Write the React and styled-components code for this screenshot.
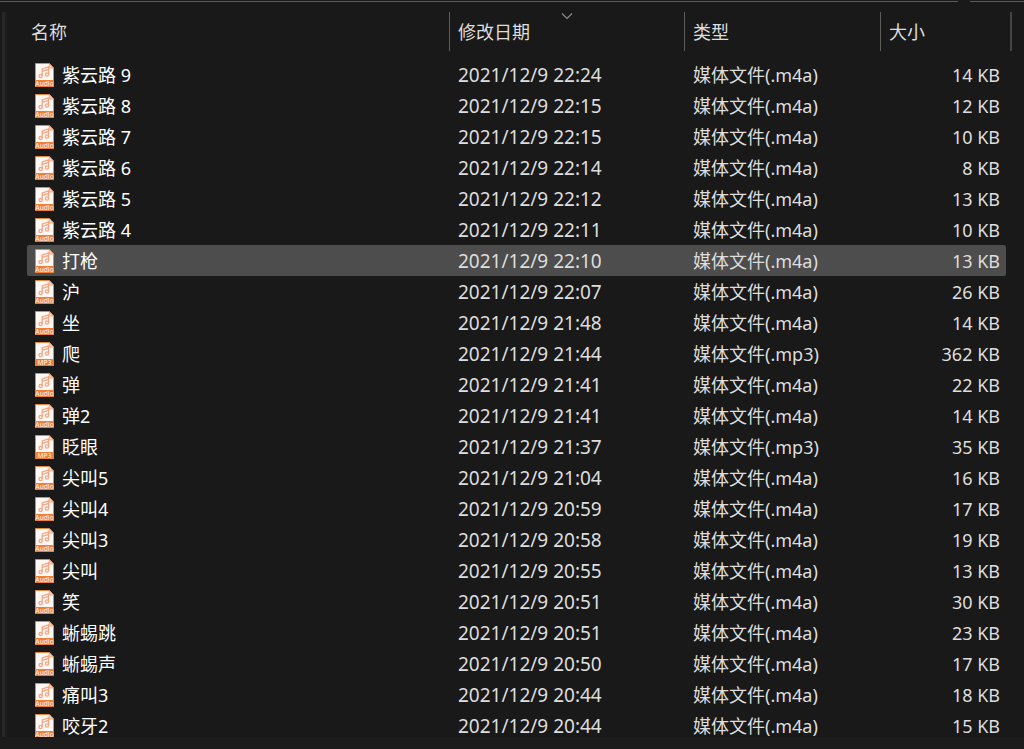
import { useState } from 'react';
import styled, { createGlobalStyle, css } from 'styled-components';

const GlobalStyle = createGlobalStyle`
  * {
    box-sizing: border-box;
  }
  body {
    margin: 0;
    background: #191919;
    color: #dedede;
    font-family: 'Noto Sans', 'Noto Sans CJK SC', sans-serif;
    font-size: 18px;
  }
`;

const Window = styled.div`
  display: flex;
  flex-direction: column;
  height: 100vh;
  overflow: hidden;
`;
const TopEdge = styled.div`
  display: flex;
  flex: none;
  gap: 12px;
  height: 12px;
  padding-top: 1px;
`;
const BoxEdge = styled.div`
  flex: ${(props) => (props.$grow ? '1' : '0 0 54px')};
  height: 1px;
  background: #5c5c5c;
`;
const Content = styled.main`
  display: flex;
  flex: 1;
  min-height: 0;
  padding: 0 12px 0 2px;
`;
const PaneDivider = styled.div`
  flex: none;
  width: 5px;
  margin-right: 20px;
  border-left: 3px solid #282828;
  background: #1e1e1e;
`;
const StatusBar = styled.footer`
  flex: none;
  height: 12px;
  background: #1c1c1c;
`;

const FileTable = styled.table`
  flex: 1;
  table-layout: fixed;
  border-collapse: separate;
  border-spacing: 0;
  align-self: flex-start;
`;
const HeaderCell = styled.th`
  width: ${(props) => props.$width || 'auto'};
  height: 47px;
  padding: 0;
  vertical-align: top;
`;
const HeaderButton = styled.button`
  position: relative;
  display: flex;
  align-items: center;
  width: 100%;
  height: 39px;
  padding: 0 0 2px ${(props) => (props.$first ? '4px' : '8px')};
  border: 0;
  border-right: ${(props) => (props.$last ? '2px solid #444' : '1px solid #5e5e5e')};
  background: none;
  color: #dedede;
  font: inherit;
  font-weight: 400;
  text-align: left;
`;
const SortArrow = styled.svg`
  position: absolute;
  top: 0;
  left: 50%;
  width: 12px;
  height: 8px;
  margin-left: -6px;
`;

const Row = styled.tr`
  cursor: default;
  ${(props) =>
    props.$selected &&
    css`
      td {
        background-color: #4d4d4d;
      }
    `}
`;
const Cell = styled.td`
  height: 31px;
  padding: 0 0 0 8px;
  line-height: 30px;
  white-space: nowrap;
`;
const NameCell = styled(Cell)`
  border-radius: 2px 0 0 2px;
  color: #fff;
`;
const DateCell = styled(Cell)`
  font-size: 19px;
`;
const SizeCell = styled(Cell)`
  padding-right: 6px;
  border-right: 6px solid transparent;
  background-clip: padding-box;
  border-radius: 0 8px 8px 0 / 0 2px 2px 0;
  text-align: right;
`;
const FileLabel = styled.div`
  display: flex;
  align-items: center;
  gap: 8px;
  height: 30px;
`;
const IconSvg = styled.svg`
  flex: none;
  width: 19px;
  height: 24px;
`;

const columns = [
  { key: 'name', title: '名称' },
  { key: 'date', title: '修改日期', width: '235px' },
  { key: 'type', title: '类型', width: '196px' },
  { key: 'size', title: '大小', width: '131px' },
];

const files = [
  ['紫云路 9', '22:24', 'm4a', 14],
  ['紫云路 8', '22:15', 'm4a', 12],
  ['紫云路 7', '22:15', 'm4a', 10],
  ['紫云路 6', '22:14', 'm4a', 8],
  ['紫云路 5', '22:12', 'm4a', 13],
  ['紫云路 4', '22:11', 'm4a', 10],
  ['打枪', '22:10', 'm4a', 13],
  ['沪', '22:07', 'm4a', 26],
  ['坐', '21:48', 'm4a', 14],
  ['爬', '21:44', 'mp3', 362],
  ['弹', '21:41', 'm4a', 22],
  ['弹2', '21:41', 'm4a', 14],
  ['眨眼', '21:37', 'mp3', 35],
  ['尖叫5', '21:04', 'm4a', 16],
  ['尖叫4', '20:59', 'm4a', 17],
  ['尖叫3', '20:58', 'm4a', 19],
  ['尖叫', '20:55', 'm4a', 13],
  ['笑', '20:51', 'm4a', 30],
  ['蜥蜴跳', '20:51', 'm4a', 23],
  ['蜥蜴声', '20:50', 'm4a', 17],
  ['痛叫3', '20:44', 'm4a', 18],
  ['咬牙2', '20:44', 'm4a', 15],
];

const FileIcon = ({ ext }) => (
  <IconSvg viewBox="0 0 19 24" aria-hidden="true">
    <path d="M.5.5h13.7l4.3 4.6v18.4H.5z" fill="#fff8f4" stroke="#ee8440" />
    <path d="M14.2.5v4.6h4.3z" fill="#fbd3bb" stroke="#ee9a68" strokeWidth=".7" />
    <path d="M0 17h19v7H0z" fill="#f07f36" />
    <g fill="none" stroke="#f5a583" strokeWidth="1.3">
      <path d="M7.2 13V6l6.4-2v7.4M7.2 8.4l6.4-2" />
      <circle cx="5.6" cy="13" r="1.6" />
      <circle cx="12" cy="11.5" r="1.6" />
    </g>
    <text
      x="9.5"
      y="23"
      textAnchor="middle"
      fontFamily="Noto Sans, sans-serif"
      fontSize="6.6"
      fontWeight="500"
      fill="#ffe9dc"
    >
      {ext === 'mp3' ? 'MP3' : 'Audio'}
    </text>
  </IconSvg>
);

const App = () => {
  const [selected, setSelected] = useState(6);

  return (
    <Window>
      <GlobalStyle />
      <TopEdge>
        <BoxEdge $grow />
        <BoxEdge />
      </TopEdge>
      <Content>
        <PaneDivider />
        <FileTable>
          <thead>
            <tr>
              {columns.map((col, i) => (
                <HeaderCell key={col.key} $width={col.width} scope="col">
                  <HeaderButton
                    type="button"
                    $first={i === 0}
                    $last={i === columns.length - 1}
                  >
                    {col.title}
                    {col.key === 'date' && (
                      <SortArrow viewBox="0 0 12 8" aria-hidden="true">
                        <path d="M1 1.5l5 5 5-5" fill="none" stroke="#8c8c8c" strokeWidth="1.2" />
                      </SortArrow>
                    )}
                  </HeaderButton>
                </HeaderCell>
              ))}
            </tr>
          </thead>
          <tbody>
            {files.map(([name, time, ext, size], i) => (
              <Row key={name} $selected={i === selected} onClick={() => setSelected(i)}>
                <NameCell>
                  <FileLabel>
                    <FileIcon ext={ext} />
                    {name}
                  </FileLabel>
                </NameCell>
                <DateCell>2021/12/9 {time}</DateCell>
                <Cell>媒体文件(.{ext})</Cell>
                <SizeCell>{size} KB</SizeCell>
              </Row>
            ))}
          </tbody>
        </FileTable>
      </Content>
      <StatusBar />
    </Window>
  );
};

export default App;
